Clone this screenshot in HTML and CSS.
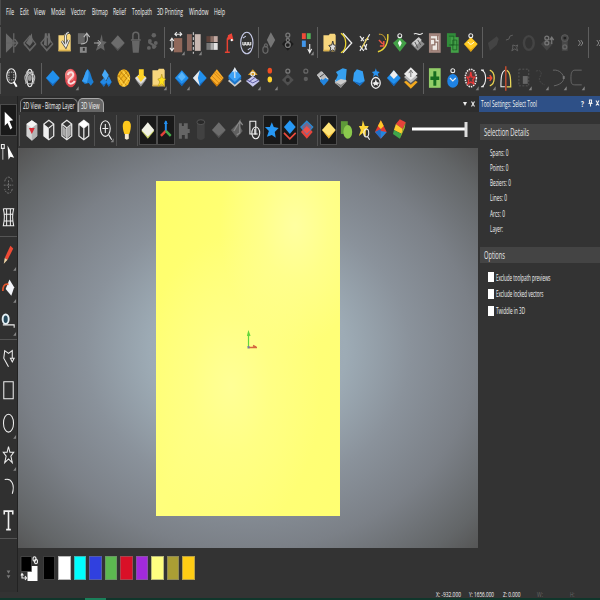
FILE: index.html
```html
<!DOCTYPE html>
<html lang="en">
<head>
<meta charset="utf-8">
<title>3D View</title>
<link rel="stylesheet" href="styles.css">
</head>
<body>
<svg class="defs" width="0" height="0">
  <defs>
    <symbol id="tri" viewBox="-9 -15 18 30"><path d="M8 8.500V12.500H5Z" fill="#858585"/></symbol>
    <symbol id="chev" viewBox="-9 -15 18 30"><path d="M-2-3L0 0L-2 3M.5-3L2.500 0L.5 3" fill="none" stroke="#888"/></symbol>
    <symbol id="blue" viewBox="-9 -15 18 30"><path d="M0-8L7 0L0 8L-7 0Z" fill="#2190ee"/><path d="M-7 0L0 6L7 0L0 8.500Z" fill="#1565b8"/></symbol>
    <symbol id="gem" viewBox="-9 -15 18 30"><path d="M0-8L7 0L0 8L-7 0Z" fill="#6c6c6c"/><path d="M-7 0L0 6L7 0L0 8Z" fill="#505050"/></symbol>
    <symbol id="folder" viewBox="-9 -15 18 30"><path d="M-6.500-8H-1L0-9.500H5L6-8V8.500H-6.500Z" fill="#f7d67d"/><path d="M-6.500 7H6V8.500H-6.500Z" fill="#d9b04c"/></symbol>
  </defs>
</svg>
<div class="app">
  <nav class="menu">
    <svg width="8" height="14"><text y="10" textLength="8" lengthAdjust="spacingAndGlyphs">File</text></svg>
    <svg width="8.800" height="14"><text y="10" textLength="8.800" lengthAdjust="spacingAndGlyphs">Edit</text></svg>
    <svg width="11.300" height="14"><text y="10" textLength="11.300" lengthAdjust="spacingAndGlyphs">View</text></svg>
    <svg width="14.300" height="14"><text y="10" textLength="14.300" lengthAdjust="spacingAndGlyphs">Model</text></svg>
    <svg width="14.800" height="14"><text y="10" textLength="14.800" lengthAdjust="spacingAndGlyphs">Vector</text></svg>
    <svg width="15.800" height="14"><text y="10" textLength="15.800" lengthAdjust="spacingAndGlyphs">Bitmap</text></svg>
    <svg width="13" height="14"><text y="10" textLength="13" lengthAdjust="spacingAndGlyphs">Relief</text></svg>
    <svg width="20" height="14"><text y="10" textLength="20" lengthAdjust="spacingAndGlyphs">Toolpath</text></svg>
    <svg width="26" height="14"><text y="10" textLength="26" lengthAdjust="spacingAndGlyphs">3D Printing</text></svg>
    <svg width="19.500" height="14"><text y="10" textLength="19.500" lengthAdjust="spacingAndGlyphs">Window</text></svg>
    <svg width="11" height="14"><text y="10" textLength="11" lengthAdjust="spacingAndGlyphs">Help</text></svg>
  </nav>

  <div class="bar bar-top">
    <i class="edge"></i>
    <svg class="i" viewBox="-9 -15 18 30"><path d="M-6-10L1-3V3L-6 10Z" fill="#696969"/><path d="M2-10V10M-6 0H6M3-4L6 0L3 4" class="g"/></svg>
    <svg class="i" viewBox="-9 -15 18 30"><path d="M-6 0L0-7L6 1L0 8Z" fill="#484848" class="g"/><path d="M-6 1L0 7L6 1" class="g"/><path d="M-4 0L2-10L3-1L0 3Z" fill="#6c6c6c"/></svg>
    <svg class="i" viewBox="-9 -15 18 30"><path d="M-6 0L0-7L6 1L0 8Z" class="g"/><path d="M-6 1L0 7L6 1" class="g"/><path d="M-3 2L-2-10L0-10V3ZM1-10L3-10L4-1L1 3Z" fill="#6c6c6c"/></svg>
    <svg class="i" viewBox="-9 -15 18 30"><use href="#folder" x="-9" y="-15" width="18" height="30"/><path d="M4-11C-1-10 1-4 1 3M-3-2L1 4L4-3" stroke="#444" stroke-width="2.500" fill="none"/><path d="M4-11C-1-10 1-4 1 3M-3-2L1 4L4-3" class="w"/></svg>
    <svg class="i" viewBox="-9 -15 18 30"><path d="M-5-10H2V1H-5Z" fill="#666"/><path d="M-3 4H4V10H-3Z" fill="#888"/><path d="M-2 1C6 1 5-4 4-9M1-6L4-10L7-6" class="w d"/><path d="M0 5H2V8H0Z" fill="#333"/></svg>
    <svg class="i" viewBox="-9 -15 18 30"><path d="M2-9L3-2L7-1L4 2L5 8L1 5L-4 8L-2 2L-3-1L0-2Z" fill="#666"/><path d="M-6 0H0M-2-3L1 0L-2 3" stroke="#aaa" fill="none"/></svg>
    <svg class="i" viewBox="-9 -15 18 30"><use href="#gem" x="-9" y="-15" width="18" height="30"/></svg>
    <svg class="i" viewBox="-9 -15 18 30"><path d="M-4-2H4L3 10H-3Z" fill="#666"/><path d="M-5-3H5M-3-3V-8C-3-12 3-12 3-8V-3" stroke="#666" stroke-width="1.500" fill="none"/></svg>
    <svg class="i" viewBox="-9 -15 18 30"><g fill="#626262"><circle cx="1" cy="-8" r="2.300"/><circle cx="-3" cy="-2" r="2"/><circle cx="-4" cy="5" r="2"/><circle cx="1" cy="4" r="2"/><circle cx="3" cy="0" r="2"/><path d="M-4-2L4 3L3 5L-5 0Z"/></g></svg>
    <i class="sep"></i>
    <svg class="i" viewBox="-9 -15 18 30"><path d="M-3-5H5.500V9.500H-3Z" fill="#90685a"/><path d="M-2-9H5M0-11L-2-9L0-7M3-11L5-9L3-7M-5-4V7M-7-2L-5-5L-3-2M-7 5L-5 8L-3 5" class="w"/><use href="#tri" x="-9" y="-15" width="18" height="30"/></svg>
    <svg class="i" viewBox="-9 -15 18 30"><path d="M-7-9H-2V8H-7Z" fill="#8b675d"/><path d="M1-9H7V8H1Z" fill="#c9b8b1"/><path d="M-.5-11V11" stroke="#ddd" stroke-dasharray="3 2"/><use href="#tri" x="-9" y="-15" width="18" height="30"/></svg>
    <svg class="i" viewBox="-9 -15 18 30"><path d="M-5.500-7H-1.500V-1H-5.500Z" fill="#5d4038"/><path d="M-1.500-7H2V-1H-1.500Z" fill="#8b6e65"/><path d="M2-7H6V-1H2Z" fill="#c3aaa3"/><path d="M-5.500 0H-1.500V7H-5.500Z" fill="#777"/><path d="M-1.500 0H2V7H-1.500Z" fill="#aaa"/><path d="M2 0H6V7H2Z" fill="#e3e3e3"/></svg>
    <svg class="i" viewBox="-9 -15 18 30"><path d="M-4 9.500H1M-1.500 9V-4L1-8" stroke="#e84232" stroke-width="1.500" fill="none"/><path d="M-1-8L3-10L5-2L2-4L-1-3Z" fill="#ee4437"/><circle cx="3" cy="-3" r="1.200" fill="#fff"/></svg>
    <svg class="i" viewBox="-9 -15 18 30"><ellipse rx="6.300" ry="11" class="w lav"/><path d="M-4-1V2H-2V-1M-1-1V2H1V-1M2-1V2H4V-1" stroke="#fff" fill="none"/><path d="M-4-5L-1-7M4 5L1 7" class="w lav"/></svg>
    <i class="sep"></i>
    <svg class="i" viewBox="-9 -15 18 30"><path d="M1-11L5.500-3L1 5L-3-3Z" fill="#767676"/><ellipse cx="-4.500" cy="7" rx="2.600" ry="3.500" class="g"/><circle cx="-4" cy="2.500" r="1.500" class="g"/></svg>
    <svg class="i" viewBox="-9 -15 18 30"><path d="M0-5L6 1L0 8L-6 1Z" fill="#1d1d1d"/><circle cy="-8" r="2" class="g l"/><circle cy="-3" r="1.600" class="g l"/><circle cy="2" r="2.500" class="g l"/></svg>
    <svg class="i" viewBox="-9 -15 18 30"><path d="M-4-10H0V-4H-4Z" fill="#ee4b38"/><path d="M1-10H5V-4H1Z" fill="#51b35a"/><path d="M-4-2.500H0V4H-4Z" fill="#4296ea"/><path d="M4 1V9M2 6L4 10L6 6" class="w"/><use href="#tri" x="-9" y="-15" width="18" height="30"/></svg>
    <i class="sep wide"></i>
    <svg class="i" viewBox="-9 -15 18 30"><use href="#folder" x="-9" y="-15" width="18" height="30"/><path d="M3-2L4 2L7 2.500L5 5L6 9L3 7L0 9L1 5L-1 2.500L2 2Z" fill="#ddd" stroke="#333"/></svg>
    <svg class="i" viewBox="-9 -15 18 30"><path d="M-4-10L5 0L-4 10" stroke="#eee" fill="none" stroke-width="1.300"/><path d="M-6-10C0-6 1 6-6 10" stroke="#ecd62e" fill="none" stroke-width="1.300"/></svg>
    <svg class="i" viewBox="-9 -15 18 30"><path d="M-5-7L-1-2M-4-2L-1-6M-5 8L5-9M0-3L4-4M-1 1L2 7M2 1L0 7M-5 3L-1 8" stroke="#eee" stroke-width="1.200" fill="none"/><path d="M-3 5L3-6" stroke="#e5c52c"/></svg>
    <svg class="i" viewBox="-9 -15 18 30"><path d="M5-9C6 0 2 7-5 9" stroke="#e7d338" stroke-width="1.500" fill="none"/><path d="M-4-9C1-9 2-6 3-3" stroke="#d2a52c" fill="none"/><path d="M-4-3L0 1M1-2V3H-3" stroke="#ef5542" stroke-width="1.500" fill="none"/></svg>
    <svg class="i" viewBox="-9 -15 18 30"><path d="M0-6L7 0L0 9L-7 0Z" fill="#43a047"/><path d="M0-3L2 0L0 4L-2 0Z" fill="#fff"/><circle cy="-7.500" r="2" class="w"/></svg>
    <svg class="i" viewBox="-9 -15 18 30"><path d="M0-5L7 1L0 8L-7 1Z" fill="#8d8d8d"/><path d="M-6 0L1-6L4-3L-3 4Z" fill="#ccc"/><path d="M-3-1L0 5M0-3L3 2" stroke="#555" fill="none"/><path d="M-4-9C-1-12 1-6 5-10" class="w"/></svg>
    <svg class="i" viewBox="-9 -15 18 30"><path d="M-6-10H6V10H-6Z" fill="#a3867e"/><path d="M-4-7H4V7H-4Z" fill="#eee9e5"/><path d="M-4-4H0V2H-3V8M3-8V-3M3 8V-1H0" stroke="#8d6e63" stroke-width="1.300" fill="none"/></svg>
    <svg class="i" viewBox="-9 -15 18 30"><path d="M-6-10H3V4H-6Z" fill="#318c3a"/><path d="M-2-6H6V10H-2Z" fill="#43a047"/><path d="M-4-7H1V2H-4M0-3H4V7H0ZM-2 2H6" stroke="#195c22" stroke-width=".8" fill="none"/></svg>
    <svg class="i" viewBox="-9 -15 18 30"><path d="M0-6L7 1L0 9L-7 1Z" fill="#ffca23"/><path d="M-7 1L0 7L7 1L0 9Z" fill="#db9c12"/><circle cy="-7.500" r="2" class="w"/><path d="M-3-1C-1 2 1 2 3-1" stroke="#fff" fill="none"/></svg>
    <i class="sep"></i>
    <svg class="i" viewBox="-9 -15 18 30"><path d="M-6 0L3-7L5-4L3 2L-4 8Z" fill="#444"/></svg>
    <svg class="i" viewBox="-9 -15 18 30"><path d="M-6-3L-3-4L-2-7L1-8M1 2L4 3L6 2L5 5L6 8L3 6L0 8L1 5Z" stroke="#606060" fill="none"/></svg>
    <svg class="i" viewBox="-9 -15 18 30"><ellipse rx="5" ry="7" fill="none" stroke="#444" stroke-width="2.500"/></svg>
    <svg class="i" viewBox="-9 -15 18 30"><path d="M0-5L6 1L0 8L-6 1Z" fill="#454545"/><circle cy="-5" r="2" class="g l"/><circle cy="0" r="2" class="g l"/><path d="M5 1V-6M3-3L5-6L7-3" class="g l"/></svg>
    <svg class="i" viewBox="-9 -15 18 30"><path d="M-3-4H3V8H-3Z" fill="#484848"/><circle cy="-5" r="3.500" fill="#484848" stroke="#5c5c5c"/><circle cy="-5" r="1.500" fill="#222"/><circle cy="4" r="2" class="g"/></svg>
    <svg class="i" viewBox="-9 -15 18 30"><use href="#chev" x="-10.500" y="-15" width="18" height="30"/></svg>
    <i class="sep tight"></i>
    <svg class="i" viewBox="-9 -15 18 30"><use href="#chev" x="-9" y="-15" width="18" height="30"/></svg>
  </div>

  <div class="bar bar-second">
    <i class="edge"></i>
    <svg class="i" viewBox="-9 -15 18 30"><ellipse cx="-.5" cy="-2" rx="4.700" ry="7.500" class="w"/><path d="M2 4L5 9" stroke="#fff" stroke-width="2"/><path d="M-3-6V2H2V-6Z" stroke="#bbb" stroke-dasharray="1.500 1" fill="none"/></svg>
    <svg class="i" viewBox="-9 -15 18 30"><ellipse rx="3" ry="9" class="w"/><ellipse rx="5" ry="6" class="w d"/><path d="M-4-6C2-6 5 0 4 6M4-6C-2-6-5 0-4 6" class="w d"/><ellipse rx="2" ry="3" fill="#999"/></svg>
    <i class="sep"></i>
    <svg class="i" viewBox="-9 -15 18 30"><use href="#blue" x="-9" y="-15" width="18" height="30"/></svg>
    <svg class="i" viewBox="-9 -15 18 30"><ellipse rx="6" ry="9.500" fill="#df4750"/><ellipse cx="-1" cy="-3" rx="5" ry="6" fill="#ef7b7b"/><path d="M-3-3C-2-8 4-6 2-2C0 1-4 2-2 5C0 7 3 5 4 3" stroke="#f9dede" stroke-width="2" fill="none"/><use href="#tri" x="-9" y="-15" width="18" height="30"/></svg>
    <svg class="i" viewBox="-9 -15 18 30"><path d="M0-9C3-7 3-1 6 4L3 8L1 5L-3 6L-6 3C-3-1-3-7 0-9Z" fill="#1b7ed4"/><path d="M0-9C2-3 0 1-1 5L-6 3C-3-1-3-7 0-9Z" fill="#39a0f5"/></svg>
    <svg class="i" viewBox="-9 -15 18 30"><path d="M-1-9L3-3L0 3L-4-3Z" fill="#46a9f7"/><path d="M-2 0L1 4L-2 9L-6 4ZM3-2L6 4L3 9L0 4Z" fill="#2288e4"/><path d="M-6 4L-2 7L1 4L-2 9ZM0 4L3 7L6 4L3 9Z" fill="#1765b6"/></svg>
    <svg class="i" viewBox="-9 -15 18 30"><ellipse rx="6.500" ry="9" fill="#f5b824"/><path d="M-6-3L3 8M-4-7L6 4M0-9L6 0M6-4L-3 8M4-7L-6 4M0-9L-6 0" stroke="#b07507" stroke-width=".7"/><path d="M-6-1L1 9M-2-8L6 2M6-2L-1 9" stroke="#ffe265" stroke-width=".7"/></svg>
    <svg class="i" viewBox="-9 -15 18 30"><path d="M-6 0L0-5L6 0L0 8Z" fill="#ddd"/><path d="M-6 1L0 6L6 1L0 9Z" fill="#999"/><path d="M-2-9H3V-2H5L0 4L-4-2H-2Z" fill="#ffd426"/></svg>
    <svg class="i" viewBox="-9 -15 18 30"><use href="#folder" x="-9" y="-15" width="18" height="30"/><path d="M3-4L4 0L7 1L5 4L6 9L3 6L-1 9L1 4L-1 1L2 0Z" fill="#ffe11c" stroke="#9b7d18" stroke-width=".5"/><use href="#tri" x="-9" y="-15" width="18" height="30"/></svg>
    <i class="sep"></i>
    <svg class="i" viewBox="-9 -15 18 30"><use href="#blue" x="-9" y="-15" width="18" height="30"/><path d="M0-6L4-1L0 3L-4-1Z" fill="#58b4f8"/><use href="#tri" x="-9" y="-15" width="18" height="30"/></svg>
    <svg class="i" viewBox="-9 -15 18 30"><use href="#blue" x="-9" y="-15" width="18" height="30"/><path d="M0-8L-7 0L0 8L-2 0Z" fill="#e7e7e7"/></svg>
    <svg class="i" viewBox="-9 -15 18 30"><path d="M0-9L7 0L0 8L-7 0Z" fill="#f9ab28"/><path d="M-5-2L2 5M-3-5L4 2M-2-7L6 1M-6 1L0 7" stroke="#c67c10" stroke-width=".8"/><path d="M-7 1L0 7L7 1L0 9Z" fill="#d17e0b"/></svg>
    <svg class="i" viewBox="-9 -15 18 30"><path d="M0-3L7 3L0 9L-7 3Z" fill="#ccc"/><path d="M0-10L6.500-2V1L0 7L-6.500 1V-2Z" fill="#1d75c9"/><path d="M0-10L6.500-2L0 4L-6.500-2Z" fill="#3ba0f4"/><path d="M0 0V-10M-2-6L0-10L2-6" class="w"/></svg>
    <svg class="i" viewBox="-9 -15 18 30"><path d="M0-2L7 3L0 9L-7 3Z" fill="#c7c7ee"/><path d="M-6 2L0 5L6 2M-4 4L3-1" stroke="#5b5a9f" fill="none"/><path d="M0-9L5-3H-5Z" fill="#d89d26"/><circle cy="-4" r="2" class="w"/><use href="#tri" x="-9" y="-15" width="18" height="30"/></svg>
    <svg class="i" viewBox="-9 -15 18 30"><ellipse cy="-7.500" rx="2.300" ry="3" fill="#f04d22"/><ellipse cy="1.500" rx="2.300" ry="3" fill="#ffd42e"/><use href="#tri" x="-9" y="-15" width="18" height="30"/></svg>
    <svg class="i" viewBox="-9 -15 18 30"><path d="M0-4L6 2L0 8L-6 2Z" fill="#505050"/><circle cy="-7" r="2" class="g l"/><circle cy="2" r="2" fill="#292929"/></svg>
    <svg class="i" viewBox="-9 -15 18 30"><circle cy="-7" r="2" class="g"/><circle cy="1" r="2.200" fill="#5c5c5c"/></svg>
    <svg class="i" viewBox="-9 -15 18 30"><path d="M-6-3L-1-7L6 1L1 7Z" fill="#ddd"/><path d="M0-2L6 2L1 8L-3 3Z" fill="#2285df"/><path d="M-6-3L-2-7L4-1L0 2Z" fill="#bbb"/><path d="M-3-1L1-4" stroke="#444"/></svg>
    <svg class="i" viewBox="-9 -15 18 30"><path d="M-6 2L3-1L6 3L0 10L-6 5Z" fill="#ccc"/><path d="M-5-6L2-10L6-9L5 2L0 1L-6 4L-3-3Z" fill="#36a0ef"/><path d="M-6 4L0 7L6 3L0 10Z" fill="#888"/></svg>
    <svg class="i" viewBox="-9 -15 18 30"><path d="M-2-9L4-7L6 3L1 8L-6 3L-5-5Z" fill="#35a0f4"/><path d="M-6 3L1 5L6 3L1 8Z" fill="#166bc1"/></svg>
    <svg class="i" viewBox="-9 -15 18 30"><path d="M0-10L1-7L4-6L2-4L3-1L0-3L-3-1L-2-4L-4-6L-1-7Z" fill="#2992ef"/><ellipse cy="5" rx="4.500" ry="5.500" fill="#333" stroke="#eee" stroke-width="1.300"/><path d="M0 1L1 4L4 5L2 6V8L0 7L-2 8V6L-4 5L-1 4Z" fill="#eee"/></svg>
    <svg class="i" viewBox="-9 -15 18 30"><use href="#blue" x="-9" y="-15" width="18" height="30"/><path d="M0-8L4-3L0 1L-4-3Z" fill="#eee"/></svg>
    <svg class="i" viewBox="-9 -15 18 30"><path d="M0 0L7 4L0 11L-7 4Z" fill="#f3a91f"/><path d="M0-4L7 1L0 7L-7 1Z" fill="#555"/><path d="M0-6L7-1L0 5L-7-1Z" fill="#bbb"/><path d="M0-11L7-4L0 2L-7-4Z" fill="#eaeaea"/><path d="M0-1V-8M-2-5L0-8L2-5" stroke="#777" fill="none"/></svg>
    <i class="sep wide"></i>
    <svg class="i" viewBox="-9 -15 18 30"><path d="M-6-10H6V10H-6Z" fill="#92cd68"/><path d="M-1.500-7H1.500V-1.500H4.500V2H1.500V8H-1.500V2H-4.500V-1.500H-1.500Z" fill="#176d20"/></svg>
    <svg class="i" viewBox="-9 -15 18 30"><ellipse cy="3" rx="5.700" ry="7" fill="#1f83e4"/><path d="M-3 0L0 3L3 0" class="w"/><circle cy="-7.500" r="2" class="w"/></svg>
    <svg class="i" viewBox="-9 -15 18 30"><ellipse rx="5.700" ry="9" fill="#553c3c" stroke="#eee" stroke-width="1.500" stroke-dasharray="1.500 1"/><path d="M0-6L1-1L4-1L2 2L3 6L0 4L-3 6L-2 2L-4-1L-1-1Z" fill="none" stroke="#ed3737" stroke-width="1.300"/><use href="#tri" x="-9" y="-15" width="18" height="30"/></svg>
    <svg class="i" viewBox="-9 -15 18 30"><path d="M-6-8C-1-6-1 6-6 9M-7-8H-4M-7 9H-4" class="w"/><path d="M2-8C8-6 8 6 2 8" stroke="#ead451" stroke-width="1.300" fill="none"/><path d="M-1 0H4M2-3L4 0L2 3" stroke="#f34c36" stroke-width="1.500" fill="none"/><use href="#tri" x="-9" y="-15" width="18" height="30"/></svg>
    <svg class="i" viewBox="-9 -15 18 30"><path d="M-1-8C-4-6-5-3-5 9H-1" class="w"/><path d="M1-8C4-6 5-3 5 9H1" stroke="#e9d85a" fill="none" stroke-width="1.300"/><path d="M0-12V13" stroke="#e85531" stroke-width="1.200"/></svg>
    <svg class="i" viewBox="-9 -15 18 30"><path d="M-5-9H5V8H-5Z" fill="none" stroke="#555" stroke-dasharray="2 1.500"/><path d="M-1-2H4V6H-1Z" fill="#666"/><use href="#tri" x="-9" y="-15" width="18" height="30"/></svg>
    <svg class="i" viewBox="-9 -15 18 30"><path d="M-5-7C0-9 2-5-1-1C-3 3 1 6 4 7" stroke="#484848" fill="none" stroke-dasharray="2 1"/><use href="#tri" x="-9" y="-15" width="18" height="30"/></svg>
    <svg class="i" viewBox="-9 -15 18 30"><path d="M-6-8C1-9 5-3 5 0C5 4 1 7-5 8" stroke="#666" fill="none"/><path d="M4-2H6V1H4Z" fill="#777"/><use href="#tri" x="-9" y="-15" width="18" height="30"/></svg>
    <svg class="i" viewBox="-9 -15 18 30"><path d="M5-8H-2C-5-8-6-5-6 0C-6 6-5 7-2 7H5" stroke="#666" fill="none"/><use href="#tri" x="-9" y="-15" width="18" height="30"/></svg>
    <svg class="i last" viewBox="-9 -15 18 30"><use href="#chev" x="-9" y="-15" width="18" height="30"/></svg>
  </div>

  <main class="work">
    <aside class="tools">
      <svg class="on" viewBox="-9 -16 18 32"><path d="M-4-9V6L-1 3L2 10L4 8L1 1L5 0Z" fill="#fff"/></svg>
      <svg viewBox="-9 -16 18 32"><path d="M-1-7L-0 8L2 5L6 6Z" fill="#fff"/><path d="M-6-4V8" stroke="#ccc"/><path d="M-7.500-8H-4.500V-4H-7.500Z" class="w"/></svg>
      <svg viewBox="-9 -16 18 32"><path d="M-4-4C-3-10 3-10 4-4M4 4C3 10-3 10-4 4M-5 0H5M0-5V5" stroke="#777" stroke-dasharray="2 1" fill="none"/></svg>
      <svg viewBox="-9 -16 18 32"><path d="M-5.500-9H5.500C4-3 4 3 5.500 9H-5.500C-4 3-4-3-5.500-9M-2-9V9M2-9V9M-5-3H5M-5 4H5" class="w"/></svg>
      <i></i>
      <svg viewBox="-9 -16 18 32"><path d="M2-10L5-7L-1 5L-4 3Z" fill="#ef4a35"/><path d="M-4 3L-1 5L-5 9Z" fill="#efd5a7"/><use href="#tri" x="-9" y="-11" width="18" height="30"/></svg>
      <svg viewBox="-9 -16 18 32"><path d="M1-8L6 0L3 9L-3 2Z" fill="#f3f5fa"/><path d="M0-3C-5-4-6 0-6 4" stroke="#e4552c" stroke-width="1.800" fill="none"/><use href="#tri" x="-9" y="-11" width="18" height="30"/></svg>
      <svg viewBox="-9 -16 18 32"><ellipse cx="-3" cy="-1" rx="3.200" ry="5" fill="#274a5c" stroke="#e5f0f5" stroke-width="2"/><path d="M-6 5H6V8" class="w"/><use href="#tri" x="-9" y="-11" width="18" height="30"/></svg>
      <i></i>
      <svg viewBox="-9 -16 18 32"><path d="M0 9L-5 0L-4-8L0-5L4-8V0M2 0H6L4 4Z" class="w"/></svg>
      <svg viewBox="-9 -16 18 32"><path d="M-5-9H5V9H-5Z" class="w"/></svg>
      <svg viewBox="-9 -16 18 32"><ellipse rx="5.300" ry="9.500" class="w"/><use href="#tri" x="-9" y="-11" width="18" height="30"/></svg>
      <svg viewBox="-9 -16 18 32"><path d="M0-9L1.500-3H5.500L2.500 1L4 8L0 4L-4 8L-2.500 1L-5.500-3H-1.500Z" class="w"/><use href="#tri" x="-9" y="-11" width="18" height="30"/></svg>
      <svg viewBox="-9 -16 18 32"><path d="M-4-8C3-10 7-3 4 7" class="w"/></svg>
      <svg viewBox="-9 -16 18 32"><path d="M-4.500-6V-9.500H4.500V-6M0-9.500V10M-2.500 10H2.500" stroke="#eee" stroke-width="1.700" fill="none"/></svg>
      <i></i>
      <svg class="more" viewBox="-9 -16 18 32"><path d="M-2-5H2L0-1.500ZM-2 0H2L0 3.500Z" fill="#777"/></svg>
    </aside>

    <section class="center">
      <header class="tabs">
        <div class="tab t1"><svg width="52" height="14"><text y="9.500" textLength="51.500" lengthAdjust="spacingAndGlyphs">2D View - Bitmap Layer</text></svg></div>
        <div class="tab t2"><svg width="19" height="14"><text y="9.500" textLength="18.500" lengthAdjust="spacingAndGlyphs">3D View</text></svg></div>
        <svg class="ctl" width="14" height="14"><path d="M1 5H5L3 9Z" fill="#eee"/><path d="M9.500 4.500L12.500 9.500M12.500 4.500L9.500 9.500" class="w"/></svg>
      </header>
      <div class="bar viewbar">
        <i class="edge"></i>
        <svg class="i" viewBox="-9 -15 18 30"><path d="M0-10L5.500-6V6L0 11L-5.500 6V-6Z" fill="#d2d2d2"/><path d="M0-10L5.500-6L0-2L-5.500-6Z" fill="#f4f4f4"/><path d="M0-2V11L5.500 6V-6Z" fill="#b3b3b3"/><path d="M-3-2L3-2L0 4Z" fill="#d72c36"/></svg>
        <svg class="i" viewBox="-9 -15 18 30"><path d="M0-10L5-6V6L0 10L-5 6V-6Z" fill="#333" stroke="#e5e5e5" stroke-width="1.300"/><path d="M-5-6L0-2V10L-5 6Z" fill="#f0f0f0"/><path d="M1-1L4-4V5L1 8Z" fill="#444"/><path d="M0-2L5-6" class="w"/></svg>
        <svg class="i" viewBox="-9 -15 18 30"><path d="M0-10L5-6V6L0 10L-5 6V-6ZM-5-6L0-2L5-6M0-2V10" fill="#333" stroke="#e5e5e5" stroke-width="1.300"/><path d="M0-2L4-5V5L0 9ZM-4-4L-1-1V8L-4 5Z" fill="#aaa"/></svg>
        <svg class="i" viewBox="-9 -15 18 30"><path d="M0-10L5-6V6L0 10L-5 6V-6ZM-5-6L0-2L5-6M0-2V10" fill="#333" stroke="#e5e5e5" stroke-width="1.300"/><path d="M0-10L5-6L0-2L-5-6Z" fill="#fff"/></svg>
        <i class="sep"></i>
        <svg class="i" viewBox="-9 -15 18 30"><ellipse cx="-.5" cy="-1.500" rx="5" ry="8" class="w"/><path d="M-3.500-1.500H2.500M-.5-6V3M3 5L6 10" class="w"/><use href="#tri" x="-9" y="-15" width="18" height="30"/></svg>
        <i class="sep"></i>
        <svg class="i" viewBox="-9 -15 18 30"><path d="M0-9.500C5-9.500 5-3 2.500 4H-2.500C-5-3-5-9.500 0-9.500Z" fill="#ffc91c"/><path d="M-2 4H2V9L0 10L-2 9Z" fill="#f5ead0"/></svg>
        <i class="sep"></i>
        <svg class="i on" viewBox="-9 -15 18 30"><path d="M0-6L6.500 1L0 9L-6.500 1Z" fill="#cad266"/><path d="M0-8L6.500 0L0 7L-6.500 0Z" fill="#f1f1e5"/></svg>
        <svg class="i on" viewBox="-9 -15 18 30"><path d="M0 1V-9" stroke="#238ff0" stroke-width="2"/><path d="M0 1L-5 6" stroke="#e6413a" stroke-width="2.500"/><path d="M0 1L5 6" stroke="#48ac4d" stroke-width="2.500"/><path d="M-2-6L0-10L2-6Z" fill="#238ff0"/></svg>
        <svg class="i" viewBox="-9 -15 18 30"><path d="M-5-7H-2V-4H0V-7H4V-1H6V3H4V9H1V5H-2V9H-5Z" fill="#656565"/></svg>
        <svg class="i" viewBox="-9 -15 18 30"><path d="M-4-8H4V8C2 11-2 11-4 8Z" fill="#414141"/><ellipse cy="-8" rx="4" ry="2.500" fill="#292929" stroke="#555"/></svg>
        <svg class="i" viewBox="-9 -15 18 30"><use href="#gem" x="-9" y="-15" width="18" height="30"/></svg>
        <svg class="i" viewBox="-9 -15 18 30"><path d="M-6 0L1-7L6 1L0 8Z" fill="#606060"/><path d="M-3 1L3-9V3L0 5M3-9L6-5" stroke="#888" fill="none" stroke-width="1.300"/></svg>
        <svg class="i" viewBox="-9 -15 18 30"><path d="M-4-9H2V4H-4Z" class="w"/><ellipse cx="2" cy="3" rx="4" ry="6" class="w"/><path d="M1-1V4H4" class="w"/></svg>
        <svg class="i on" viewBox="-9 -15 18 30"><path d="M0-8L2-3L7-2L3 2L4 8L0 5L-5 7L-3 1L-7-3L-2-3Z" fill="#2798f4"/></svg>
        <svg class="i on" viewBox="-9 -15 18 30"><path d="M0-10L6-3L0 4L-6-3Z" fill="#2798f4"/><path d="M-6 3L0 9L6 3" stroke="#ed4b3e" stroke-width="1.700" fill="none"/></svg>
        <svg class="i" viewBox="-9 -15 18 30"><path d="M0-5L6 2L0 9L-6 2Z" fill="#e9443b"/><path d="M0-9L6-3L0 4L-6-3Z" fill="#78678b" stroke="#278ad3" stroke-width="1.300"/><path d="M0-4L4 0L0 4L-4 0Z" fill="#f05048"/></svg>
        <i class="sep"></i>
        <svg class="i on" viewBox="-9 -15 18 30"><path d="M0-8L7 0L0 8L-7 0Z" fill="#ffe477"/><path d="M-7 0L0 6L7 0L0 9Z" fill="#efba35"/></svg>
        <svg class="i" viewBox="-9 -15 18 30"><path d="M-5-9H2V4H-5Z" fill="#5e9a39"/><ellipse cx="2" cy="2" rx="4.500" ry="7" fill="#8bc94d"/></svg>
        <svg class="i" viewBox="-9 -15 18 30"><path d="M-1-10L1-4L5-4L2 1L2 7L-1 3L-5 6L-3 0L-5-4L-2-4Z" fill="#ffd737"/><ellipse cx="2.500" cy="3" rx="2.500" ry="4" class="w"/><path d="M4 7L6 10" class="w"/></svg>
        <svg class="i" viewBox="-9 -15 18 30"><path d="M0-10L6 2L0 9L-6 2Z" fill="#e23a33"/><path d="M0-10L3-4L0-1L-3-4Z" fill="#ffc729"/><path d="M-6 2L0-1V9Z" fill="#1e6fc9"/><path d="M0 9V1L6 2Z" fill="#2286df"/></svg>
        <svg class="i" viewBox="-9 -15 18 30"><path d="M-3-6L1-11L7-8L4-1Z" fill="#e6433a"/><path d="M-3-6L4-1L3 4L-5 0Z" fill="#ffcb2f"/><path d="M-5 0L3 4L1 9L-6 4Z" fill="#3fa64b"/><path d="M7-8L6-2L1 9L4-1Z" fill="#a1b72f"/></svg>
        <svg class="slider" width="58" height="30"><path d="M1 14H54" stroke="#fff" stroke-width="3"/><path d="M53.500 7H56.500V22H53.500Z" fill="#ddd"/></svg>
      </div>
      <div class="canvas">
        <div class="sheet">
          <svg class="origin" width="12" height="20"><path d="M1.500 17V3M.5 6L1.500 2L3 6" stroke="#62d73d" stroke-width="1.200" fill="none"/><path d="M2 17.500H10M6 15.500L9 17" stroke="#d5683f" stroke-width="1.500"/><path d="M.5 16H2.500V18.500H.5Z" fill="#777fa0"/></svg>
        </div>
      </div>
    </section>

    <aside class="panel">
      <header><svg width="58" height="14"><text y="10.500" textLength="56" lengthAdjust="spacingAndGlyphs">Tool Settings: Select Tool</text></svg>
        <svg width="19" height="14"><text x="1" y="10.500" textLength="3" lengthAdjust="spacingAndGlyphs" class="bold">?</text><path d="M9.500 4H11.500V7H9.500ZM8.500 7.500H12.500M10.500 8V10.500M16 4.500L19 9.500M19 4.500L16 9.500" class="w"/></svg>
      </header>
      <h2><svg width="50" height="16"><text y="11.500" textLength="45" lengthAdjust="spacingAndGlyphs">Selection Details</text></svg></h2>
      <ul class="details">
        <li><svg width="30" height="14"><text y="10" textLength="18.500" lengthAdjust="spacingAndGlyphs">Spans: 0</text></svg></li>
        <li><svg width="30" height="14"><text y="10" textLength="18.500" lengthAdjust="spacingAndGlyphs">Points: 0</text></svg></li>
        <li><svg width="30" height="14"><text y="10" textLength="21" lengthAdjust="spacingAndGlyphs">Beziers: 0</text></svg></li>
        <li><svg width="30" height="14"><text y="10" textLength="17" lengthAdjust="spacingAndGlyphs">Lines: 0</text></svg></li>
        <li><svg width="30" height="14"><text y="10" textLength="15" lengthAdjust="spacingAndGlyphs">Arcs: 0</text></svg></li>
        <li><svg width="30" height="14"><text y="10" textLength="13" lengthAdjust="spacingAndGlyphs">Layer:</text></svg></li>
      </ul>
      <h2 class="second"><svg width="50" height="16"><text y="11.500" textLength="21" lengthAdjust="spacingAndGlyphs">Options</text></svg></h2>
      <ul class="options">
        <li><b></b><svg width="60" height="14"><text y="10" textLength="54.500" lengthAdjust="spacingAndGlyphs">Exclude toolpath previews</text></svg></li>
        <li><b></b><svg width="60" height="14"><text y="10" textLength="47.500" lengthAdjust="spacingAndGlyphs">Exclude locked vectors</text></svg></li>
        <li><b></b><svg width="60" height="14"><text y="10" textLength="29" lengthAdjust="spacingAndGlyphs">Twiddle in 3D</text></svg></li>
      </ul>
    </aside>
  </main>

  <footer class="foot">
    <div class="palette">
      <svg class="pair" width="18" height="26"><path d="M6.500 10H16.500V25H6.500Z" fill="#fff"/><path d="M0 .5H10.500V15.500H0Z" fill="#000" stroke="#555" stroke-width=".7"/><ellipse cx="13.500" cy="3" rx="1.500" ry="2.200" class="w"/><ellipse cx="15" cy="5.500" rx="1.500" ry="2.200" class="w"/><path d="M1 18V22H5M0 19.500L1 17.500L2.500 19.500M4 20L5.500 22L4 24" class="w"/></svg>
      <b class="c-black"></b><b class="c-white"></b><b class="c-cyan"></b><b class="c-blue"></b><b class="c-green"></b><b class="c-red"></b><b class="c-purple"></b><b class="c-lemon"></b><b class="c-olive"></b><b class="c-amber"></b>
    </div>
    <div class="status">
      <svg width="33.500" height="12"><text y="8.500" textLength="25" lengthAdjust="spacingAndGlyphs">X: -932.000</text></svg>
      <svg width="34" height="12"><text y="8.500" textLength="25" lengthAdjust="spacingAndGlyphs">Y: 1656.000</text></svg>
      <svg width="33.500" height="12"><text y="8.500" textLength="17.500" lengthAdjust="spacingAndGlyphs">Z: 0.000</text></svg>
      <svg width="33.500" height="12" class="off"><text y="8.500" textLength="6" lengthAdjust="spacingAndGlyphs">W:</text></svg>
      <svg width="20" height="12" class="off"><text y="8.500" textLength="4.500" lengthAdjust="spacingAndGlyphs">H:</text></svg>
    </div>
    <div class="strip"><b></b></div>
  </footer>
</div>
</body>
</html>
```
FILE: styles.css
```css
* { box-sizing: border-box; margin: 0; padding: 0; }
body { background: #333; width: 600px; height: 600px; overflow: hidden; font-family: "Open Sans", "Noto Sans", sans-serif; }
ul { list-style: none; }
svg { display: block; flex: none; overflow: visible; }
.defs { position: absolute; }
text { font-size: 8.5px; fill: #f4f4f4; }
.bold { font-weight: 700; }
.w { fill: none; stroke: #eee; stroke-width: 1.1; }
.w.d { stroke: #bbb; }
.w.lav { stroke: #c7cbe8; }
.g { fill: none; stroke: #666; stroke-width: 1.3; }
.g.l { stroke: #777; }

.app { width: 600px; height: 600px; display: grid; grid-template-rows: 25px 36px 35px 452px 52px; }
.menu { display: flex; gap: 5.7px; padding: 5px 0 0 5px; border-left: 1px solid #4a4a4a; }

.bar { display: flex; align-items: center; overflow: hidden; }
.bar-top, .bar-second { padding-bottom: 1px; }
.i { width: 17.65px; height: 30px; }
.i.last { margin-left: 13px; }
.edge { width: 1px; height: 31px; background: #555; margin-right: 2.2px; flex: none; }
.sep { width: 1px; height: 31px; background: #5e5e5e; margin: 0 2.3px; flex: none; }
.sep.wide { margin: 0 2.7px; }
.sep.tight { margin: 0 1px 0 -3px; }

.work { display: grid; grid-template-columns: 18px 461px 121px; }
.tools { background: #303030; padding-top: 8px; border-right: 1px solid #222; }
.tools svg { width: 17px; height: 32.3px; }
.tools i { display: block; height: 1px; margin: 2.5px 0; background: #555; }
.tools .on, .viewbar .on { background: #191919; outline: 1px solid #4c4c4c; outline-offset: -1px; }
.tools .more { margin-top: 20px; }

.center { display: grid; grid-template-rows: 16px 36px 400px; }
.tabs { display: flex; background: #2d2d2d; padding: 2px 0 0 2px; }
.tab { height: 14px; padding-left: 2px; border: 1px solid #777; border-bottom: 0; border-radius: 5px 6px 0 0; background: #282828; }
.t1 { width: 58px; }
.t2 { width: 26px; background: #666; border-color: #aaa; }
.ctl { margin-left: auto; margin-right: 3px; margin-top: -1px; }
.viewbar { padding: 0 0 0 1px; }
.viewbar .edge { margin-right: 2.5px; }
.viewbar .sep { margin: 0 1.35px; background: #505050; }
.slider { margin-left: 3px; }
.canvas { margin-right: 1px; padding: 32.5px 0 0 138px; background: radial-gradient(ellipse 325px 283px at 230px 203px, #a9b7c2 0, #9dabb5 30%, #8a929b 50%, #7b8087 70%, #636668 90%, #545454 100%); }
.sheet { width: 183.5px; height: 335px; padding: 149px 0 0 91px; background: radial-gradient(ellipse 75px 120px at 139px 45px, #ffffa0 0, rgba(255,255,150,.6) 45%, rgba(255,255,130,0)), radial-gradient(ellipse 90px 150px at 75px 205px, #ffff96 0, rgba(255,255,140,.6) 45%, rgba(255,255,130,0)), linear-gradient(115deg, #ffff68, #ffff7c 45%, #ffff72); }

.panel { background: #333; }
.panel header { height: 15.5px; background: #2e5087; display: flex; justify-content: space-between; padding: 0 1px 0 2px; }
.panel h2 { height: 16px; margin: 12px 0 0 1px; background: #444; padding-left: 4px; font-weight: 400; }
.panel .second { margin-top: 11px; }
.panel h2 text { font-size: 10.5px; fill: #e8e8e8; }
.details { padding: 6px 0 0 10.5px; height: 96px; }
.details li { height: 15.3px; }
.options { padding: 8px 0 0 9px; }
.options li { height: 16.8px; display: flex; gap: 2px; }
.options b { width: 6px; height: 10px; background: #fff; margin-top: 1.5px; }

.foot { display: grid; grid-template-rows: 40px 10px 2px; }
.palette { display: flex; padding: 8px 0 0 21px; gap: 3px; }
.palette .pair { width: 18.5px; }
.palette b { width: 12.5px; height: 24px; border: 1px solid rgba(120,120,120,.5); }
.c-black { background: #000; }
.c-white { background: #fff; }
.c-cyan { background: #0ff; }
.c-blue { background: #3040df; }
.c-green { background: #5cb950; }
.c-red { background: #d91027; }
.c-purple { background: #a22adc; }
.c-lemon { background: #ffff80; }
.c-olive { background: #aa9e34; }
.c-amber { background: #ffcc14; }
.status { display: flex; padding-left: 435.5px; }
.status text { font-size: 7.5px; }
.status .off text { fill: #666; }
.strip { background: #10362b; }
.strip b { display: block; width: 21px; height: 2px; margin-left: 85px; background: #1a805a; }
```
